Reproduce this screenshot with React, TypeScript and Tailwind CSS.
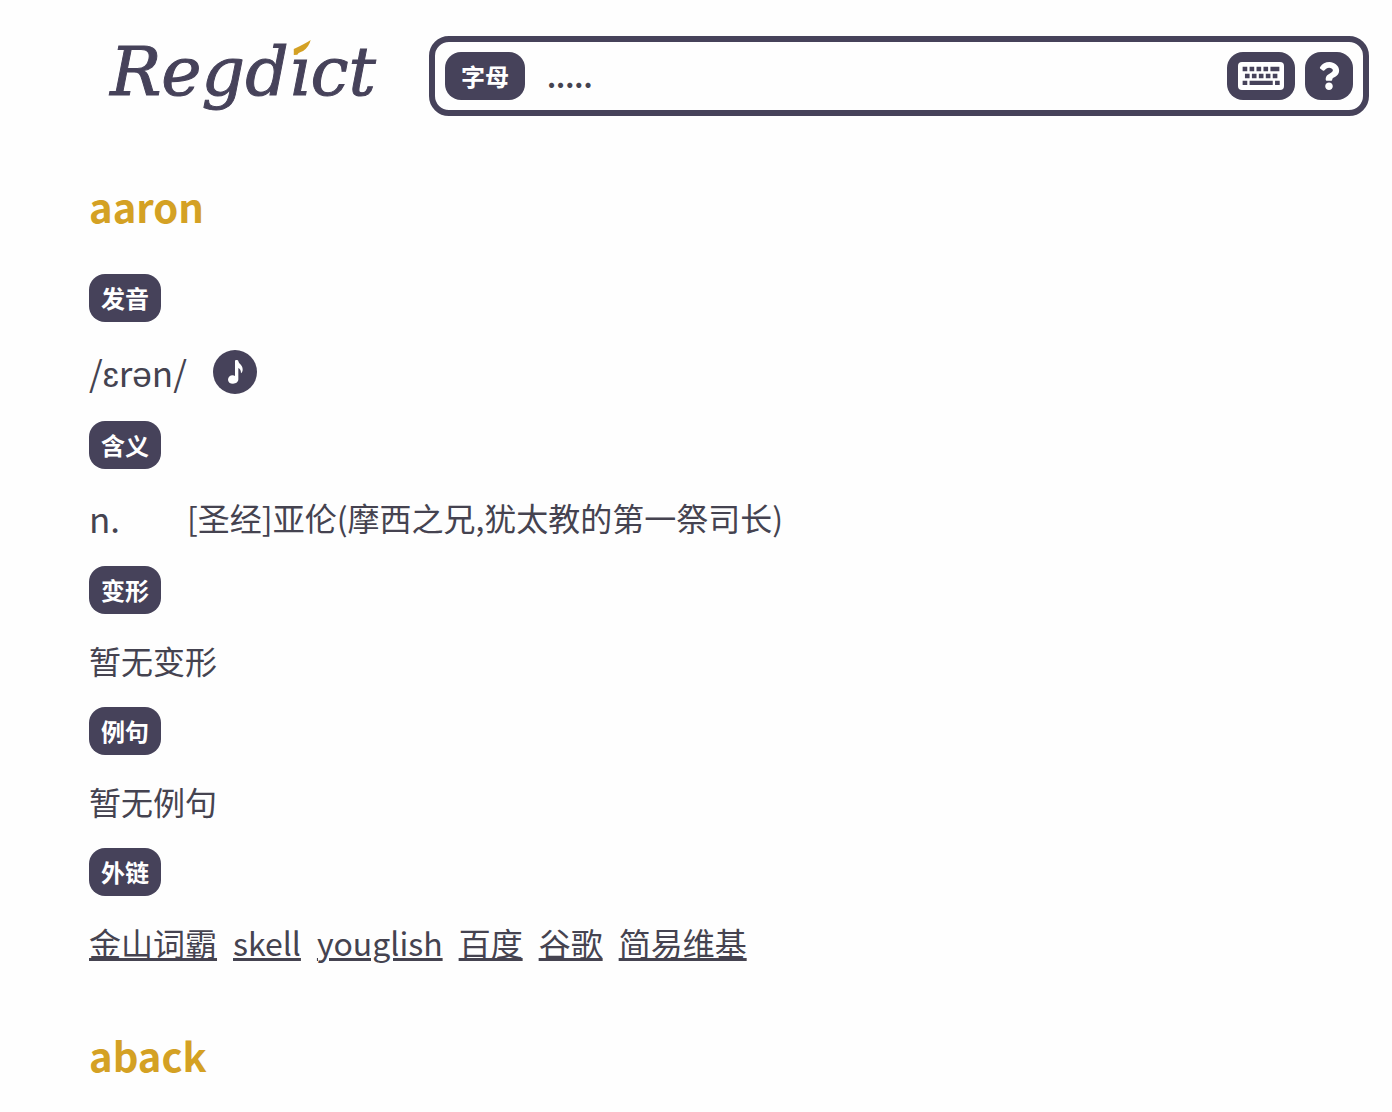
import { useState } from "react";
import type { ReactNode } from "react";
import { FaQuestion } from "react-icons/fa";

type Link = {
  label: string;
  href: string;
};

type Entry = {
  word: string;
  phonetic: string;
  pos: string;
  meaning: string;
  links: Link[];
};

const entries: Entry[] = [
  {
    word: "aaron",
    phonetic: "/ɛrən/",
    pos: "n.",
    meaning: "[圣经]亚伦(摩西之兄,犹太教的第一祭司长)",
    links: [
      { label: "金山词霸", href: "#iciba" },
      { label: "skell", href: "#skell" },
      { label: "youglish", href: "#youglish" },
      { label: "百度", href: "#baidu" },
      { label: "谷歌", href: "#google" },
      { label: "简易维基", href: "#wiki" },
    ],
  },
];

const fontStack = "font-['Noto_Sans_CJK_SC',sans-serif]";

function Logo() {
  return (
    <a aria-label="Regdict" className="flex h-20 w-[340px] shrink-0 justify-center text-[68px] leading-[72px] italic text-[#46425a] font-['DejaVu_Serif',serif] [-webkit-text-stroke:1px_#46425a]" href="#home">
      <span>Regd</span>
      <span className="relative">
        ı
        <svg className="absolute top-1 left-1 h-4 w-[18px]" viewBox="0 0 39 36" fill="#d4a124">
          <path d="M1 20 L14 14 C23 10 31 5 39 0 C37 9 31 19 22 25 C16 27 12 29 9 33 L1 34 Z" />
        </svg>
      </span>
      <span>ct</span>
    </a>
  );
}

function KeyboardIcon() {
  return (
    <svg className="h-7 w-[46px]" viewBox="0 0 139 84">
      <rect width="139" height="84" rx="12" fill="#fff" />
      <path
        fill="#46425a"
        d="M14 14h14v14H14zM35 14h14v14H35zM56 14h14v14H56zM77 14h14v14H77zM98 14h27v14H98zM21 35h14v14H21zM42 35h14v14H42zM63 35h14v14H63zM84 35h14v14H84zM105 35h14v14H105zM14 56h14v13H14zM35 56h70v13H35zM112 56h14v13H112z"
      />
    </svg>
  );
}

function NoteIcon() {
  return (
    <svg className="h-6 w-4" viewBox="0 0 48 72" fill="#fff">
      <path d="M24 3c0-4 9-4 10 0 1 9 13 11 13 25 0 5-1 9-5 12 0-10-3-14-8-16v34c0 8-7 13-16 13-9 0-15-5-15-12s6-13 14-13c3 0 5 1 7 2z" />
    </svg>
  );
}

function Tag({ children }: { children: ReactNode }) {
  return <h3 className="flex h-12 w-[72px] items-center justify-center rounded-2xl bg-[#46425a] text-2xl font-bold text-white">{children}</h3>;
}

function Word({ children }: { children: ReactNode }) {
  return <h2 className="text-[40px] leading-[56px] font-bold text-[#d4a124]">{children}</h2>;
}

export default function App() {
  const [query, setQuery] = useState(".....");

  return (
    <main className={`min-h-screen bg-[#fefefe] text-[32px] leading-[45px] text-[#454350] ${fontStack}`}>
      <header className="flex items-center pt-9 pr-[23px] pl-[73px]">
        <Logo />
        <form className="ml-4 flex h-20 min-w-0 flex-1 items-center rounded-[20px] border-6 border-[#46425a] px-2.5" onSubmit={(event) => event.preventDefault()}>
          <button className="h-12 w-20 shrink-0 rounded-2xl bg-[#46425a] text-2xl font-bold text-white" type="button">字母</button>
          <input aria-label="搜索" className="h-12 min-w-0 flex-1 px-[22px] text-[28px] font-bold outline-none" value={query} onChange={(event) => setQuery(event.target.value)} />
          <button aria-label="键盘" className="flex h-12 w-[68px] shrink-0 items-center justify-center rounded-2xl bg-[#46425a]" type="button">
            <KeyboardIcon />
          </button>
          <button aria-label="帮助" className="ml-2.5 flex h-12 w-12 shrink-0 items-center justify-center rounded-2xl bg-[#46425a] text-white" type="button">
            <FaQuestion size={28} />
          </button>
        </form>
      </header>

      <div className="px-[89px] pt-[62px]">
        {entries.map((entry) => (
          <article key={entry.word}>
            <Word>{entry.word}</Word>
            <div className="mt-10 flex flex-col gap-6">
              <Tag>发音</Tag>
              <div className="flex h-[51px] items-center gap-[26px]">
                <span className="text-[35px]">{entry.phonetic}</span>
                <button aria-label="播放发音" className="flex h-11 w-11 items-center justify-center rounded-full bg-[#46425a]" type="button">
                  <NoteIcon />
                </button>
              </div>
              <Tag>含义</Tag>
              <div className="flex h-[49px] items-center">
                <span className="w-[98px] text-[35px]">{entry.pos}</span>
                <span>{entry.meaning}</span>
              </div>
              <Tag>变形</Tag>
              <p>暂无变形</p>
              <Tag>例句</Tag>
              <p>暂无例句</p>
              <Tag>外链</Tag>
              <nav className="flex flex-wrap gap-4">
                {entry.links.map((link) => (
                  <a key={link.label} className="underline" href={link.href}>{link.label}</a>
                ))}
              </nav>
            </div>
          </article>
        ))}
        <div className="pt-[62px]">
          <Word>aback</Word>
        </div>
      </div>
    </main>
  );
}
